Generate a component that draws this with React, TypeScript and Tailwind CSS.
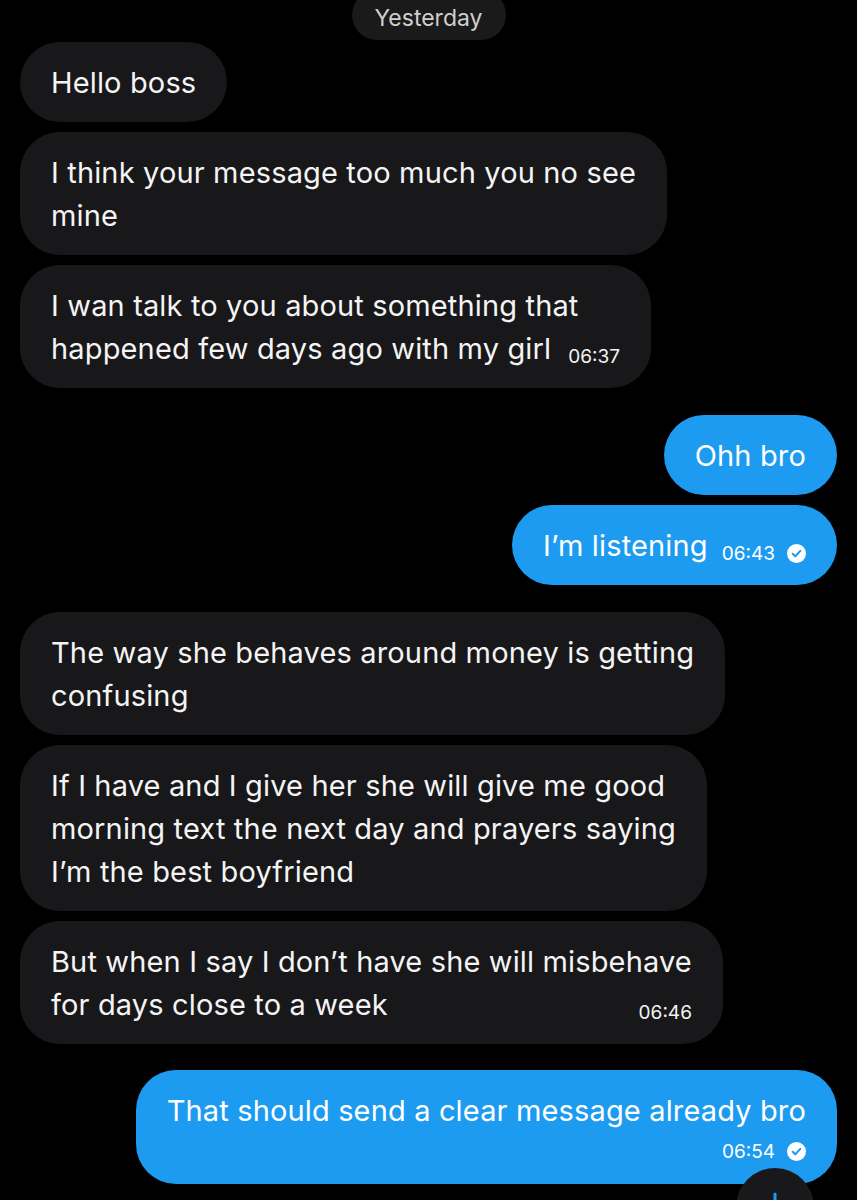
import React from "react";

const Check = () => (
  <svg width="19" height="19" viewBox="0 0 20 20" className="shrink-0">
    <circle cx="10" cy="10" r="10" fill="#ffffff" />
    <path d="M6 10.3 L8.7 13 L14 7.2" fill="none" stroke="#1d9bf0" strokeWidth="2.2" strokeLinecap="round" strokeLinejoin="round" />
  </svg>
);

const In = ({ children }: { children: React.ReactNode }) => (
  <div className="self-start bg-[#18181a] text-[#f4f4f4] rounded-[40px] px-[31px] py-[18.5px] text-[29px] tracking-[0.15px] leading-[43px]">
    {children}
  </div>
);

const Out = ({ children }: { children: React.ReactNode }) => (
  <div className="self-end bg-[#1d9bf0] text-white rounded-[40px] px-[31px] py-[18.5px] text-[29px] tracking-[0.15px] leading-[43px]">
    {children}
  </div>
);

export default function App() {
  return (
    <div
      className="relative w-[857px] h-[1200px] overflow-hidden bg-black"
      style={{ fontFamily: "Inter, 'Noto Sans', sans-serif" }}
    >
      <div className="flex flex-col px-[20px]">
        <div className="self-center -mt-[10px] h-[50px] w-[154px] rounded-[25px] bg-[#1a1a1a] flex items-end justify-center pb-[8px]">
          <span className="text-[23px] leading-[28px] text-[#cfcfcf]">Yesterday</span>
        </div>

        <div className="mt-[2px] flex flex-col gap-[10px]">
          <In>Hello boss</In>
          <In>
            <div>I think your message too much you no see</div>
            <div>mine</div>
          </In>
          <In>
            <div>I wan talk to you about something that</div>
            <div className="flex items-end">
              <span>happened few days ago with my girl</span>
              <span className="ml-[17px] text-[19px] tracking-normal leading-[26px]">06:37</span>
            </div>
          </In>
        </div>

        <div className="mt-[27px] flex flex-col gap-[10px]">
          <Out>Ohh bro</Out>
          <Out>
            <div className="flex items-end">
              <span>I’m listening</span>
              <span className="ml-[14px] text-[19px] tracking-normal leading-[26px]">06:43</span>
              <span className="ml-[12px] h-[26px] flex items-center">
                <Check />
              </span>
            </div>
          </Out>
        </div>

        <div className="mt-[27px] flex flex-col gap-[10px]">
          <In>
            <div>The way she behaves around money is getting</div>
            <div>confusing</div>
          </In>
          <In>
            <div>If I have and I give her she will give me good</div>
            <div>morning text the next day and prayers saying</div>
            <div>I’m the best boyfriend</div>
          </In>
          <In>
            <div>But when I say I don’t have she will misbehave</div>
            <div className="flex items-end justify-between">
              <span>for days close to a week</span>
              <span className="text-[19px] tracking-normal leading-[26px]">06:46</span>
            </div>
          </In>
        </div>

        <div className="mt-[26px] flex flex-col">
          <Out>
            <div>That should send a clear message already bro</div>
            <div className="flex items-center justify-end gap-[12px] h-[34px] pt-[6px]">
              <span className="text-[19px] tracking-normal leading-[26px]">06:54</span>
              <Check />
            </div>
          </Out>
        </div>
      </div>

      <div className="absolute left-[736px] top-[1168px] w-[78px] h-[78px] rounded-full bg-[#19191b] flex justify-center pt-[24px]">
        <svg width="24" height="30" viewBox="0 0 24 30">
          <path d="M12 2 V26 M3 18 L12 27 L21 18" fill="none" stroke="#1d9bf0" strokeWidth="3" strokeLinecap="round" strokeLinejoin="round" />
        </svg>
      </div>
    </div>
  );
}
